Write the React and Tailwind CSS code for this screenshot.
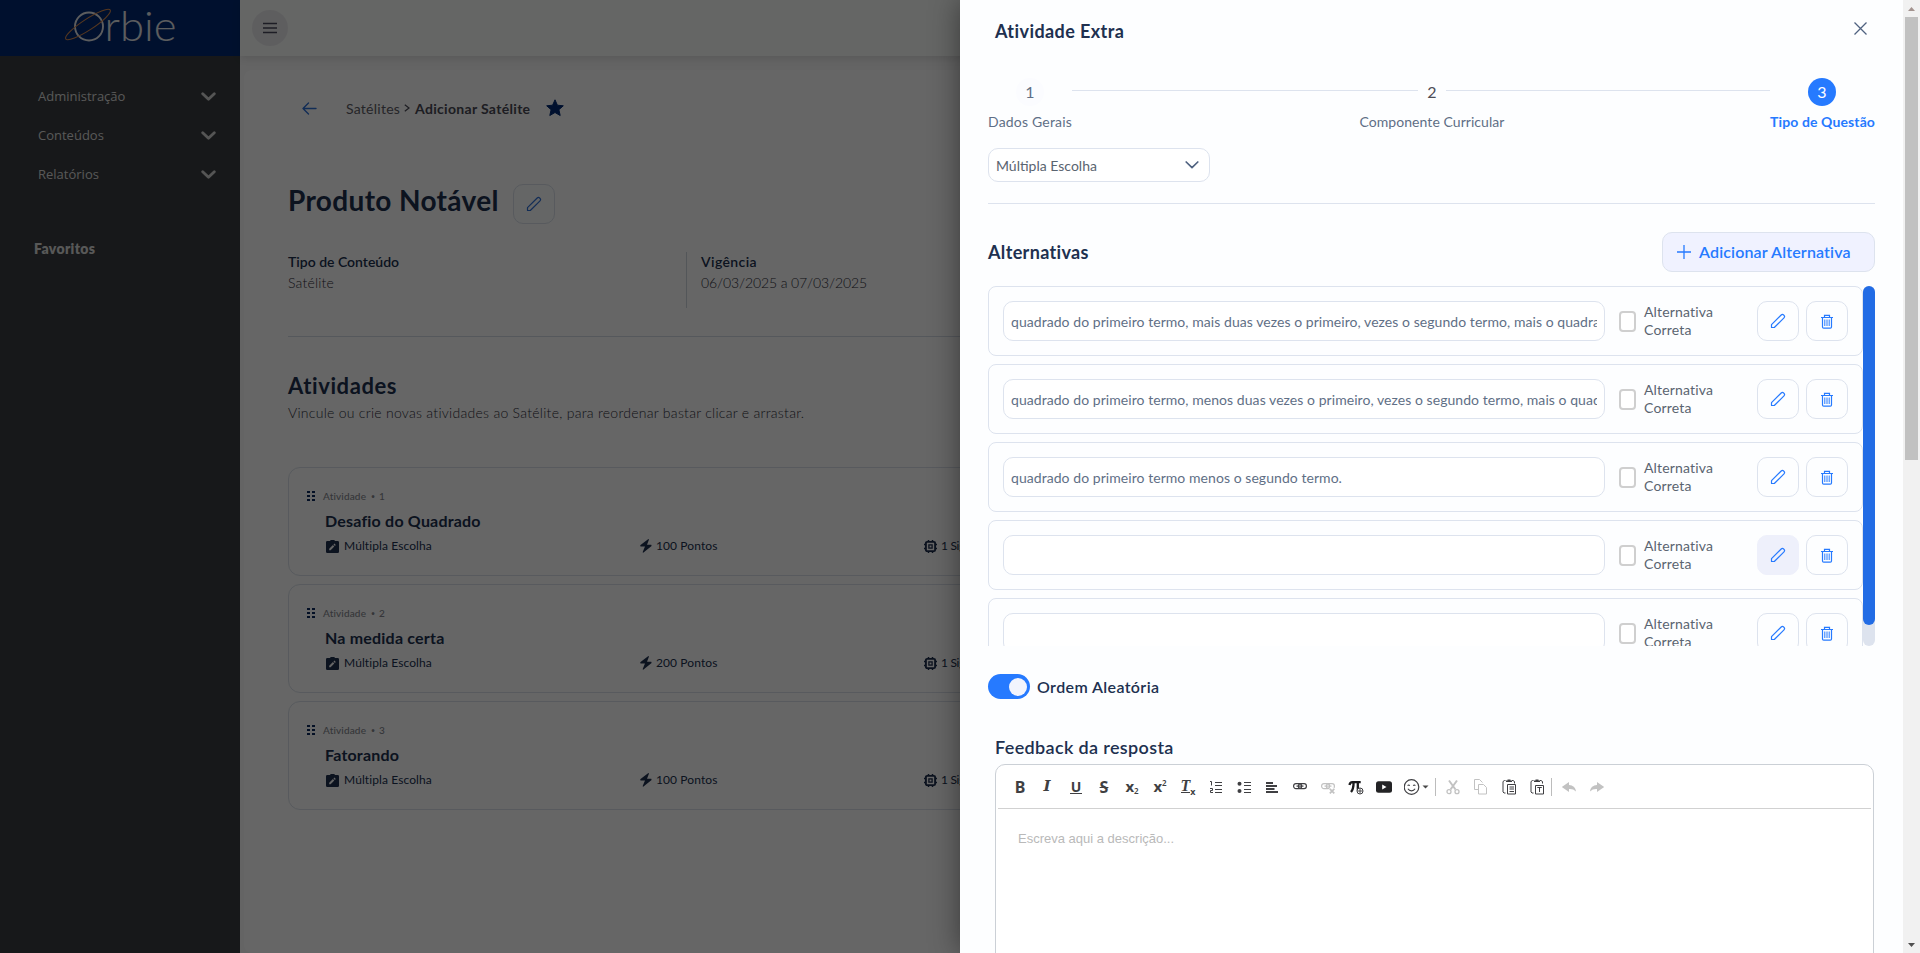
import React, { useState } from 'react';

// =============================
// DATA
// =============================
const MENU = ['Administração', 'Conteúdos', 'Relatórios'];

const ATIVIDADES = [
  { id: 1, titulo: 'Desafio do Quadrado', pontos: '100 Pontos' },
  { id: 2, titulo: 'Na medida certa', pontos: '200 Pontos' },
  { id: 3, titulo: 'Fatorando', pontos: '100 Pontos' },
];

const ALTERNATIVAS = [
  { id: 1, texto: 'quadrado do primeiro termo, mais duas vezes o primeiro, vezes o segundo termo, mais o quadrado' },
  { id: 2, texto: 'quadrado do primeiro termo, menos duas vezes o primeiro, vezes o segundo termo, mais o quadrado' },
  { id: 3, texto: 'quadrado do primeiro termo menos o segundo termo.' },
  { id: 4, texto: '', ativo: true },
  { id: 5, texto: '' },
];

// =============================
// ICONS
// =============================
const Pencil = () => (
  <svg width="16" height="16" viewBox="0 0 16 16" fill="none" stroke="currentColor" strokeWidth="1.200" strokeLinejoin="round">
    <path d="M1.500 14.500V11.700L11.200 2a1.700 1.700 0 0 1 2.400 0l.4.400a1.700 1.700 0 0 1 0 2.400L4.300 14.500Z" />
  </svg>
);

const Trash = () => (
  <svg width="12" height="15" viewBox="0 0 12 15" fill="none" stroke="currentColor" strokeWidth="1.200">
    <path d="M0 3.500h12M3.500 3.300V1.300h5v2M1.500 3.600v9.300a1.200 1.200 0 0 0 1.200 1.200h6.600a1.200 1.200 0 0 0 1.200-1.200V3.600" />
    <path d="M3.800 5.500v6.500M6 5.500v6.500M8.200 5.500v6.500" strokeWidth="1" />
  </svg>
);

const Clipboard = () => (
  <svg width="13" height="13" viewBox="0 0 13 13">
    <path fill="#20304f" d="M1.300 1h3a2.200 2.200 0 0 1 4.400 0h3A1.300 1.300 0 0 1 13 2.300v9.400a1.300 1.300 0 0 1-1.300 1.300H1.300A1.300 1.300 0 0 1 0 11.700V2.300A1.300 1.300 0 0 1 1.300 1Z" />
    <path fill="#fff" d="M3.200 10.200V8.800l3.700-3.700 1.400 1.400-3.700 3.700ZM7.500 4.500l.9-.9 1.400 1.400-.9.9Z" />
  </svg>
);

const Bolt = () => (
  <svg width="12" height="14" viewBox="0 0 12 14" fill="#20304f">
    <path d="M8.400 0 .2 6.300l.3 1.200H5L2.600 13.300l.6.500L11.600 7l-.3-1.200H7L9 .500Z" />
  </svg>
);

const Chip = () => (
  <svg width="13" height="13" viewBox="0 0 13 13" fill="none" stroke="#20304f">
    <rect x="1.900" y="1.900" width="9.200" height="9.200" rx="1.200" strokeWidth="1.900" />
    <rect x="4.900" y="4.900" width="3.200" height="3.200" strokeWidth="1.300" />
    <path d="M4.500 0v2M8.500 0v2M4.500 11v2M8.500 11v2M0 4.500h2M0 8.500h2M11 4.500h2M11 8.500h2" strokeWidth="1.500" />
  </svg>
);

const Logo = () => (
  <svg width="116" height="38" viewBox="0 0 116 38" className="overflow-visible">
    <circle cx="25" cy="20.500" r="14" fill="none" stroke="#e6e8ec" strokeWidth="1.900" />
    <ellipse cx="24" cy="18.500" rx="26.500" ry="5.500" fill="none" stroke="#d98a4e" strokeWidth="1.100" transform="rotate(-33 24 18.500)" />
    <text x="40.500" y="35" fill="#e6e8ec" fontFamily="Lato" fontWeight="300" fontSize="42" textLength="72" lengthAdjust="spacingAndGlyphs">rbie</text>
  </svg>
);

// =============================
// EDITOR TOOLBAR
// =============================
const Slot = ({ children, off }) => (
  <div className={`flex h-7 w-7 shrink-0 items-center justify-center ${off ? 'text-[#c2c2c2]' : 'text-[#3f3f42]'}`}>{children}</div>
);

const Ico = ({ children }) => (
  <svg width="16" height="16" viewBox="0 0 16 16" fill="none" stroke="currentColor">{children}</svg>
);

const LinkShape = () => (
  <>
    <rect x="1.600" y="4.600" width="8" height="5" rx="2.300" strokeWidth="1.200" />
    <rect x="6.400" y="4.600" width="8" height="5" rx="2.300" strokeWidth="1.200" />
    <path d="M4.500 7.100h7" strokeWidth="1.200" />
  </>
);

const Toolbar = () => (
  <div className="mx-[2px] flex h-[44px] items-center border-b border-[#d1d1d1] pl-[8px]">
    <Slot><b className="font-['Noto_Sans'] text-[16px] leading-none">B</b></Slot>
    <Slot><b className="mr-[2px] font-['DejaVu_Serif'] text-[15px] leading-none italic">I</b></Slot>
    <Slot><b className="border-b border-current px-px font-['Noto_Sans'] text-[14px] leading-[13px]">U</b></Slot>
    <Slot><b className="font-['Noto_Sans'] text-[16px] leading-none line-through decoration-1">S</b></Slot>
    <Slot>
      <b className="font-['Noto_Sans'] text-[15px] leading-none">x</b>
      <span className="mt-[9px] font-['Noto_Sans'] text-[8px] leading-none font-semibold">2</span>
    </Slot>
    <Slot>
      <b className="font-['Noto_Sans'] text-[15px] leading-none">x</b>
      <span className="mb-[8px] font-['Noto_Sans'] text-[8px] leading-none font-semibold">2</span>
    </Slot>
    <Slot>
      <b className="border-b border-current font-['Liberation_Serif'] text-[16px] leading-[12px] italic">T</b>
      <b className="mt-[9px] font-['Noto_Sans'] text-[9px] leading-none">x</b>
    </Slot>
    <Slot>
      <Ico>
        <path d="M7 3.500h7M7 6.500h7M7 10.500h7M7 13.500h7" />
        <path d="M2 2.500h1.500v4M2 9.500h2.500v2H2.500v2h2.500" />
      </Ico>
    </Slot>
    <Slot>
      <Ico>
        <path d="M8 3.500h7M8 6.500h7M8 10.500h7M8 13.500h7" />
        <circle cx="3.500" cy="4.800" r="2" fill="currentColor" stroke="none" />
        <circle cx="3.500" cy="12" r="2" fill="currentColor" stroke="none" />
      </Ico>
    </Slot>
    <Slot><Ico><path d="M2 4h7M2 7h11M2 10h8.500M2 13h12" strokeWidth="1.800" /></Ico></Slot>
    <Slot><Ico><LinkShape /></Ico></Slot>
    <Slot off>
      <Ico>
        <LinkShape />
        <path d="M9.500 9.500l5 5M14.500 9.500l-5 5" stroke="#fff" strokeWidth="4" />
        <path d="M9.800 9.800l4.500 4.500M14.300 9.800l-4.500 4.500" strokeWidth="1.700" />
      </Ico>
    </Slot>
    <Slot>
      <Ico>
        <path d="M1.500 6c.3-2.200 1.300-2.800 3-2.800h8.200M5.600 3.500c0 4-.4 7-2.600 9.500M9.800 3.500v6.500c0 1.500.5 2.500 1.500 2.500" stroke="#1b1b1d" strokeWidth="2.300" />
        <circle cx="12" cy="12" r="3" fill="#fff" strokeWidth="1" />
        <path d="M12 9.500v5M9.500 12h5" strokeWidth="0.900" />
      </Ico>
    </Slot>
    <Slot>
      <Ico>
        <rect x="0" y="2.300" width="16" height="11.400" rx="2.500" fill="#232325" stroke="none" />
        <path d="M6.200 5.500v5L10.500 8Z" fill="#fff" stroke="none" />
      </Ico>
    </Slot>
    <Slot>
      <Ico>
        <circle cx="7.500" cy="8" r="7.300" strokeWidth="1.200" />
        <path d="M3.700 6.700c.5-1 1.500-1 2 0M9.300 6.700c.5-1 1.500-1 2 0M3.900 9.800c1.700 2.700 5.500 2.700 7.200 0" strokeWidth="1.100" />
      </Ico>
    </Slot>
    <svg width="7" height="4" viewBox="0 0 7 4" className="-ml-1 shrink-0" fill="#484848"><path d="M.5.500h6l-3 3Z" /></svg>
    <span className="mr-[3px] ml-[6px] h-[18px] w-px bg-[#bcbcbc]" />
    <Slot off>
      <Ico>
        <path d="M4 1.500l6.500 9M12 1.500l-6.500 9" strokeWidth="2" />
        <circle cx="4" cy="12.700" r="2" strokeWidth="1.300" />
        <circle cx="12" cy="12.700" r="2" strokeWidth="1.300" />
      </Ico>
    </Slot>
    <Slot off>
      <Ico>
        <path d="M5.500 10.500h-4v-10h5l3 3" />
        <path d="M5.500 5.500h5l3 3v6.500h-8z" fill="#fff" />
      </Ico>
    </Slot>
    <Slot>
      <Ico>
        <path d="M4.500 1.500h-1l-1.500 1v10.500l1 1h1.500M11 1.500h1l1.500 1v2" />
        <path d="M5 3V1.500h1.500V.500h3v1H11V3Z" fill="currentColor" stroke="none" />
        <path d="M6.500 5.500h8v9.500h-8z" />
        <path d="M8.500 8h4.500M8.500 10h4.500M8.500 12.500h4.500" />
      </Ico>
    </Slot>
    <Slot>
      <Ico>
        <path d="M4.500 1.500h-1l-1.500 1v10.500l1 1h1.500M11 1.500h1l1.500 1v2" />
        <path d="M5 3V1.500h1.500V.500h3v1H11V3Z" fill="currentColor" stroke="none" />
        <path d="M6.500 6.500h8v8.500h-8z" />
        <path d="M8.300 8.500h4.500M10.500 8.500v4.500" />
      </Ico>
    </Slot>
    <span className="mr-[3px] h-[18px] w-px bg-[#bcbcbc]" />
    <Slot off>
      <Ico><path d="M.8 8L8 3v3c4 .300 6.500 2.500 7 6.500-2-2-4-2.700-7-2.500V13Z" fill="currentColor" stroke="none" /></Ico>
    </Slot>
    <Slot off>
      <Ico><path d="M15.200 8L8 3v3C4 6.300 1.500 8.500 1 12.500c2-2 4-2.700 7-2.500V13Z" fill="currentColor" stroke="none" /></Ico>
    </Slot>
  </div>
);

// =============================
// PAGE BEHIND THE DRAWER
// =============================
const Sidebar = () => (
  <aside className="flex w-[240px] shrink-0 flex-col bg-[#3a3d41]">
    <div className="flex h-14 items-start bg-[#002a73] pt-[6px] pl-[64px]"><Logo /></div>
    <nav className="mt-[21px] flex flex-col">
      {MENU.map((m) => (
        <div key={m} className="flex h-[39px] items-center justify-between pr-6 pl-[38px] font-['Open_Sans'] text-[13px] text-[#dcdcdc]">
          {m}
          <svg width="15" height="9" viewBox="0 0 15 9" fill="none" stroke="#d4d4d4" strokeWidth="2.800" strokeLinecap="round" strokeLinejoin="round">
            <path d="M1.700 1.700l5.800 5.600 5.800-5.600" />
          </svg>
        </div>
      ))}
    </nav>
    <p className="mt-[44px] pl-[34px] text-[14px] leading-[22px] font-extrabold tracking-[0.35px] text-[#dcdcdc]">Favoritos</p>
  </aside>
);

const AtividadeCard = ({ id, titulo, pontos }) => (
  <div className="h-[109px] rounded-xl border border-[#dbe2ea] pt-[21px] pl-[18px]">
    <div className="flex h-[14px] items-center text-[10px] leading-[14px] font-medium tracking-[0.15px] text-[#85888f]">
      <svg width="8" height="10" viewBox="0 0 8 10" className="mr-2" fill="#0b2a5c">
        <path d="M0 0h3v2H0zM5 0h3v2H5zM0 4h3v2H0zM5 4h3v2H5zM0 8h3v2H0zM5 8h3v2H5z" />
      </svg>
      <span className="w-[48px]">Atividade</span>
      <span className="w-[8px] text-[7px] leading-none">•</span>
      <span>{id}</span>
    </div>
    <h3 className="mt-[6px] pl-[18px] text-[16px] leading-6 font-bold tracking-[0.2px] text-[#20304f]">{titulo}</h3>
    <div className="mt-[5px] flex h-4 items-center pl-[19px] text-[12px] leading-4 tracking-[0.1px] text-[#20304f]">
      <span className="flex w-[314px] items-center gap-[5px]"><Clipboard />Múltipla Escolha</span>
      <span className="flex w-[284px] items-center gap-[4px]"><Bolt />{pontos}</span>
      <span className="flex items-center gap-[4px] tracking-[-0.3px]"><Chip />1 Sigla</span>
    </div>
  </div>
);

const Page = () => (
  <div className="flex h-full w-full">
    <Sidebar />
    <div className="flex min-w-0 flex-1 flex-col bg-[#f9f9f9]">
      <header className="flex h-14 items-center bg-[#fcfefd] pl-3 shadow-[0_2px_8px_rgba(0,0,0,0.12)]">
        <button className="flex size-9 items-center justify-center rounded-full bg-[#ececee]">
          <svg width="14" height="12" viewBox="0 0 14 12" stroke="#4a4a5c" strokeWidth="1.500"><path d="M0 1.500h14M0 6h14M0 10.500h14" /></svg>
        </button>
      </header>
      <main className="mt-[14px] ml-[4px] flex-1 rounded-lg bg-white pt-[26px] pr-11 pl-11">
        <div className="flex h-6 items-center text-[14px] text-[#5c5c66]">
          <svg width="15" height="13" viewBox="0 0 15 13" className="ml-[14px]" fill="none" stroke="#2f70d8" strokeWidth="1.400" strokeLinecap="round" strokeLinejoin="round">
            <path d="M14 6.500H1M6.500 1L1 6.500 6.500 12" />
          </svg>
          <span className="ml-[29px] w-[58px] tracking-[0.25px]">Satélites</span>
          <svg width="6" height="8" viewBox="0 0 6 8" fill="none" stroke="#4a4a55" strokeWidth="1.200"><path d="M.8.700L5 4 .8 7.300" /></svg>
          <span className="ml-[5px] font-bold tracking-[0.32px] text-[#4a4a55]">Adicionar Satélite</span>
          <svg width="18" height="18" viewBox="0 0 18 18" className="ml-[16px]" fill="#002a73" stroke="#002a73" strokeLinejoin="round">
            <path d="M9 .8l2.400 5.400 5.900.6-4.400 3.900 1.300 5.800L9 13.500l-5.200 3 1.300-5.800L.7 6.800l5.900-.6Z" />
          </svg>
        </div>
        <div className="mt-[64px] flex h-10 items-start">
          <h1 className="w-[225px] text-[28px] leading-8 font-bold tracking-[0.35px] text-[#20304f]">Produto Notável</h1>
          <button className="flex h-10 w-[42px] items-center justify-center rounded-[10px] border border-[#dbe2ea] bg-[#fdfeff] text-[#2f70d8]"><Pencil /></button>
        </div>
        <div className="mt-7 flex h-14 text-[14px] leading-[21px]">
          <div className="-mt-px w-[398px]">
            <p className="font-semibold text-[#20304f]">Tipo de Conteúdo</p>
            <p className="font-light tracking-[0.2px] text-[#2e2e3a]">Satélite</p>
          </div>
          <div className="border-l border-[#d0d6de] pl-[14px]">
            <p className="-mt-px font-semibold tracking-[0.4px] text-[#20304f]">Vigência</p>
            <p className="font-light tracking-[-0.11px] text-[#2e2e3a]">06/03/2025 a 07/03/2025</p>
          </div>
        </div>
        <hr className="mt-7 border-[#d5dce5]" />
        <h2 className="mt-[34px] text-[22px] leading-[30px] font-bold tracking-[0.6px] text-[#20304f]">Atividades</h2>
        <p className="text-[14px] leading-6 font-light tracking-[0.275px] text-[#2e2e3a]">
          Vincule ou crie novas atividades ao Satélite, para reordenar bastar clicar e arrastar.
        </p>
        <div className="mt-[42px] flex flex-col gap-2">
          {ATIVIDADES.map((a) => <AtividadeCard key={a.id} {...a} />)}
        </div>
      </main>
    </div>
  </div>
);

// =============================
// DRAWER
// =============================
const Stepper = () => (
  <div className="mt-[32px] flex h-[54px] shrink-0 items-start text-[14px] text-[#5f6f86]">
    <div className="flex w-[84px] flex-col items-center">
      <span className="flex size-7 items-center justify-center rounded-full bg-[#fbfcff] text-[16px]">1</span>
      <span className="mt-[6px] leading-5 tracking-[0.19px] whitespace-nowrap">Dados Gerais</span>
    </div>
    <span className="mt-3 h-px w-[346px] bg-[#dde3ee]" />
    <div className="flex w-7 flex-col items-center">
      <span className="flex size-7 items-center justify-center text-[16px] text-[#4d4d57]">2</span>
      <span className="mt-[6px] leading-5 tracking-[0.06px] whitespace-nowrap">Componente Curricular</span>
    </div>
    <span className="mt-3 h-px flex-1 bg-[#dde3ee]" />
    <div className="flex w-[105px] flex-col items-center">
      <span className="mr-px flex size-7 items-center justify-center rounded-full bg-[#267aff] text-[16px] text-white">3</span>
      <span className="mt-[6px] leading-5 font-bold tracking-[0.12px] whitespace-nowrap text-[#267aff]">Tipo de Questão</span>
    </div>
  </div>
);

const AlternativaRow = ({ texto, ativo }) => (
  <div className="flex h-[70px] shrink-0 items-center rounded-lg border border-[#dde3ee] px-[14px]">
    <div className="flex h-10 w-[602px] items-center rounded-[10px] border border-[#dde3ee] bg-white px-[7px]">
      <span className="w-full overflow-hidden text-[14px] tracking-[0.055px] whitespace-nowrap text-[#5f6f86]">{texto}</span>
    </div>
    <span className="ml-[14px] h-[21px] w-[17px] rounded-[4px] border-2 border-[#cfcfcf] bg-white" />
    <span className="ml-[8px] w-[90px] text-[14px] leading-[18px] tracking-[0.17px] text-[#5a6470]">Alternativa Correta</span>
    <button className={`ml-auto flex h-10 w-[42px] items-center justify-center rounded-[10px] border text-[#267aff] ${ativo ? 'border-[#eef0fb] bg-[#eef0fb]' : 'border-[#dde3ee]'}`}><Pencil /></button>
    <button className="ml-[7px] flex h-10 w-[42px] items-center justify-center rounded-[10px] border border-[#dde3ee] pr-px text-[#267aff]"><Trash /></button>
  </div>
);

const Drawer = ({ aleatoria, setAleatoria }) => (
  <section className="absolute top-0 right-0 flex h-full w-[960px] bg-[#fdfeff] shadow-[0_0_28px_rgba(0,0,0,0.45)]">
    <div className="flex min-w-0 flex-1 flex-col overflow-hidden pr-7 pl-7">
      <div className="flex h-[46px] shrink-0 items-end justify-between pr-2 pl-[7px]">
        <h2 className="mb-[3px] text-[18px] leading-6 font-bold tracking-[0.42px] text-[#20304f]">Atividade Extra</h2>
        <svg width="13" height="13" viewBox="0 0 13 13" className="mb-[11px]" stroke="#4f6280" strokeWidth="1.300"><path d="M.5.500l12 12M12.500.500l-12 12" /></svg>
      </div>
      <Stepper />

      <div className="mt-4 flex h-[34px] w-[222px] shrink-0 items-center justify-between rounded-[10px] border border-[#dde3ee] bg-white pr-[10px] pl-[7px] text-[14px] text-[#5a6470]">
        Múltipla Escolha
        <svg width="14" height="8" viewBox="0 0 14 8" fill="none" stroke="#4f6280" strokeWidth="1.700" strokeLinecap="round" strokeLinejoin="round"><path d="M1.200 1l5.800 5.600L12.800 1" /></svg>
      </div>
      <hr className="mt-[21px] shrink-0 border-[#dde3ee]" />

      <div className="mt-7 flex h-10 shrink-0 items-center justify-between">
        <h3 className="text-[18px] leading-6 font-bold tracking-[0.35px] text-[#20304f]">Alternativas</h3>
        <button className="flex h-10 w-[213px] items-center rounded-[10px] border border-[#dde3ee] bg-[#f0f2ff] pl-[14px] text-[16px] font-semibold tracking-[0.15px] text-[#267aff]">
          <svg width="14" height="14" viewBox="0 0 14 14" className="mr-[8px]" stroke="currentColor" strokeWidth="1.300"><path d="M7 0v14M0 7h14" /></svg>
          Adicionar Alternativa
        </button>
      </div>

      <div className="mt-[14px] flex h-[360px] shrink-0">
        <div className="flex min-w-0 flex-1 flex-col gap-2 overflow-hidden">
          {ALTERNATIVAS.map((a) => <AlternativaRow key={a.id} {...a} />)}
        </div>
        <div className="w-3 rounded-full bg-[#dde3ee]"><div className="h-[339px] rounded-full bg-[#226ce5]" /></div>
      </div>

      <div className="mt-7 flex h-[25px] shrink-0 items-center">
        <button onClick={() => setAleatoria(!aleatoria)} className={`flex h-[25px] w-[42px] items-center rounded-full px-[3px] ${aleatoria ? 'justify-end bg-[#267aff]' : 'justify-start bg-[#cfd6e2]'}`}>
          <span className="size-[18px] rounded-full bg-[#f2f4fd]" />
        </button>
        <span className="ml-[7px] text-[16px] font-semibold tracking-[0.38px] text-[#20304f]">Ordem Aleatória</span>
      </div>

      <h3 className="mt-[36px] shrink-0 pl-[7px] text-[18px] leading-6 font-semibold tracking-[0.35px] text-[#20304f]">Feedback da resposta</h3>
      <div className="mt-[5px] mr-px ml-[7px] h-[240px] shrink-0 rounded-t-[10px] border border-[#cbd0d6] bg-white">
        <Toolbar />
        <p className="mt-[20px] pl-[22px] font-['Liberation_Sans'] text-[13px] leading-5 text-[#b9b9b9]">Escreva aqui a descrição...</p>
      </div>
    </div>

    <div className="flex w-[17px] shrink-0 flex-col items-center justify-between bg-[#f1f1f1]">
      <div className="flex flex-col items-center">
        <div className="flex h-[17px] items-center"><svg width="7" height="4" viewBox="0 0 7 4" fill="#a3938f"><path d="M0 4h7L3.500 0Z" /></svg></div>
        <div className="h-[443px] w-[13px] bg-[#c1c1c1]" />
      </div>
      <div className="flex h-[17px] items-center"><svg width="7" height="4" viewBox="0 0 7 4" fill="#505050"><path d="M0 0h7L3.500 4Z" /></svg></div>
    </div>
  </section>
);

export default function App() {
  const [aleatoria, setAleatoria] = useState(true);

  return (
    <div className="relative h-[953px] w-[1920px] overflow-hidden font-['Lato',sans-serif]">
      <Page />
      <div className="absolute inset-0 bg-black/60" />
      <Drawer aleatoria={aleatoria} setAleatoria={setAleatoria} />
    </div>
  );
}
